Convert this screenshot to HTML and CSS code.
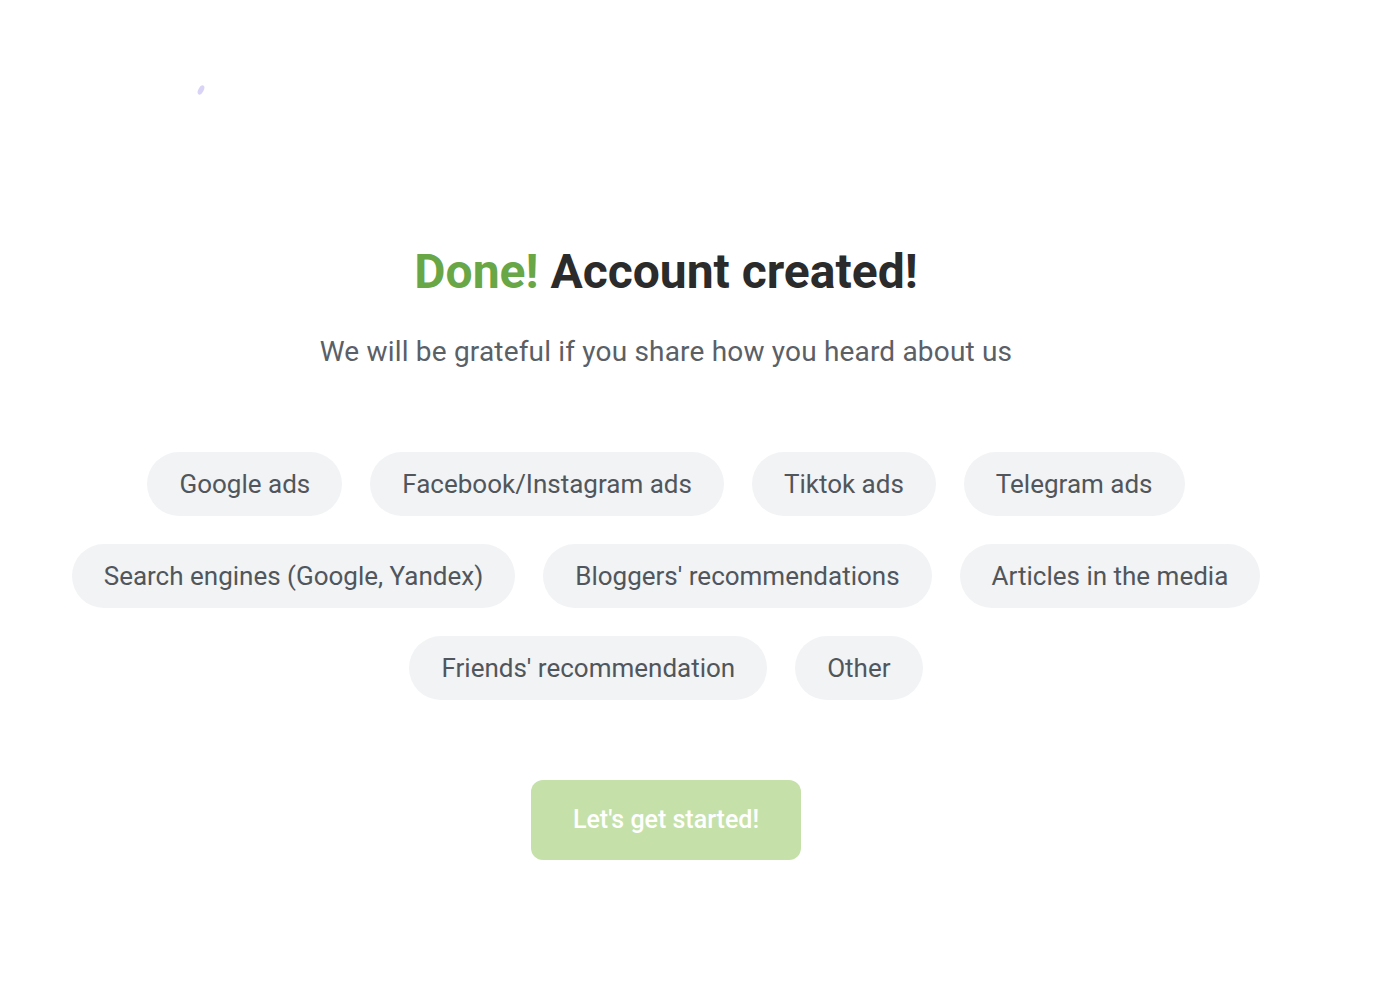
FILE: index.html
```html
<!DOCTYPE html>
<html lang="en">
<head>
<meta charset="utf-8">
<title>Account created</title>
<link rel="stylesheet" href="styles.css">
</head>
<body>
<div class="page">
  <svg class="blob" width="12" height="14" viewBox="0 0 12 14"><ellipse cx="6" cy="7" rx="2.6" ry="5" transform="rotate(28 6 7)" fill="#d9d4f7"/></svg>
  <main class="content">
    <h1 class="title"><span class="accent">Done!</span> Account created!</h1>
    <p class="subtitle">We will be grateful if you share how you heard about us</p>
    <div class="chips">
      <div class="chip-row">
        <button class="chip">Google ads</button>
        <button class="chip">Facebook/Instagram ads</button>
        <button class="chip">Tiktok ads</button>
        <button class="chip">Telegram ads</button>
      </div>
      <div class="chip-row">
        <button class="chip">Search engines (Google, Yandex)</button>
        <button class="chip">Bloggers' recommendations</button>
        <button class="chip">Articles in the media</button>
      </div>
      <div class="chip-row">
        <button class="chip">Friends' recommendation</button>
        <button class="chip">Other</button>
      </div>
    </div>
    <button class="start">Let's get started!</button>
  </main>
</div>
</body>
</html>
```
FILE: styles.css
```css
html, body {
  margin: 0;
  padding: 0;
  background: #ffffff;
  font-family: Roboto, "Liberation Sans", sans-serif;
}
.page {
  position: relative;
  width: 1332px;
  min-height: 988px;
}
.blob {
  position: absolute;
  left: 195px;
  top: 83px;
}
.content {
  display: flex;
  flex-direction: column;
  align-items: center;
  padding-top: 243px;
}
.title {
  margin: 0;
  font-size: 48px;
  line-height: 57.6px;
  font-weight: 700;
  color: #2b2b2b;
}
.accent {
  color: #68a646;
}
.subtitle {
  margin: 35px 0 0;
  font-size: 28px;
  line-height: 32px;
  letter-spacing: 0.18px;
  color: #5a6066;
}
.chips {
  margin-top: 84px;
  display: flex;
  flex-direction: column;
  gap: 28px;
  align-items: center;
}
.chip-row {
  display: flex;
  gap: 28px;
  justify-content: center;
}
.chip {
  height: 64px;
  padding: 0 32px;
  border: none;
  border-radius: 32px;
  background: #f1f3f5;
  color: #50565b;
  font-family: Roboto, "Liberation Sans", sans-serif;
  font-size: 26px;
  cursor: pointer;
  white-space: nowrap;
}
.start {
  margin-top: 80px;
  width: 270px;
  height: 80px;
  border: none;
  border-radius: 12px;
  background: #c5e1a9;
  color: #ffffff;
  font-family: Roboto, "Liberation Sans", sans-serif;
  font-size: 25px;
  font-weight: 500;
  cursor: pointer;
}
```
